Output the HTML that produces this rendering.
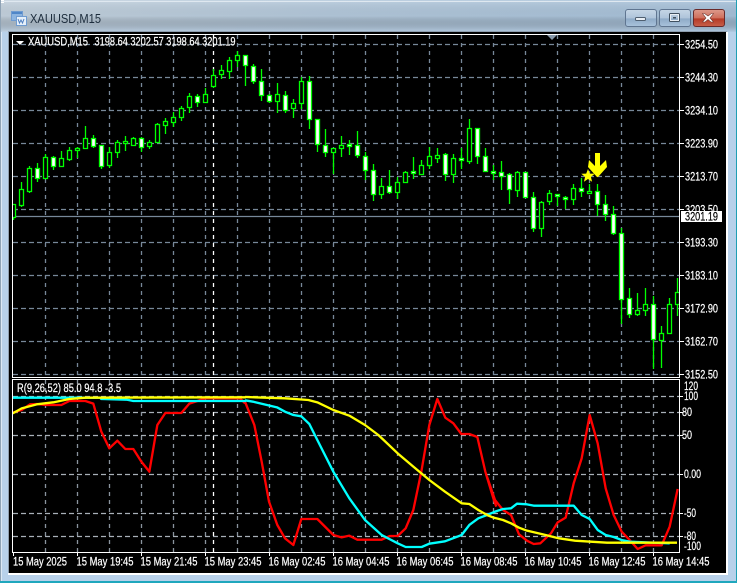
<!DOCTYPE html>
<html><head><meta charset="utf-8"><title>XAUUSD,M15</title>
<style>
html,body{margin:0;padding:0;width:737px;height:583px;overflow:hidden;background:#fff}
svg{display:block;position:absolute;left:0;top:0}
text{font-family:"Liberation Sans",sans-serif;font-size:11.5px;fill:#fff;stroke:#fff;stroke-width:.2px}
</style></head><body>
<svg width="737" height="583" viewBox="0 0 737 583" xmlns="http://www.w3.org/2000/svg">
<defs>
<linearGradient id="tb" x1="0" x2="1" y1="0" y2="0"><stop offset="0" stop-color="#c4d2de"/><stop offset=".45" stop-color="#b4c9dc"/><stop offset="1" stop-color="#a6c1da"/></linearGradient>
<linearGradient id="tv" x1="0" x2="0" y1="0" y2="1"><stop offset="0" stop-color="#fff" stop-opacity=".15"/><stop offset=".5" stop-color="#000" stop-opacity=".04"/><stop offset="1" stop-color="#bcd3ea" stop-opacity=".6"/></linearGradient>
<linearGradient id="btn" x1="0" x2="0" y1="0" y2="1"><stop offset="0" stop-color="#c6d6e6"/><stop offset=".5" stop-color="#aec4da"/><stop offset=".55" stop-color="#8fabc7"/><stop offset="1" stop-color="#a9c3dc"/></linearGradient>
<linearGradient id="cls" x1="0" x2="0" y1="0" y2="1"><stop offset="0" stop-color="#dd9a8c"/><stop offset=".5" stop-color="#cf6f5c"/><stop offset=".55" stop-color="#b53a26"/><stop offset="1" stop-color="#c8604a"/></linearGradient>
<clipPath id="cc"><rect x="13" y="35" width="666" height="342"/></clipPath>
<clipPath id="cs"><rect x="13" y="380" width="666" height="172"/></clipPath>
</defs>
<!-- window frame -->
<rect x="0" y="0" width="737" height="583" fill="#b8d1ea"/>
<rect x="0" y="0" width="737" height="32" fill="url(#tb)"/>
<rect x="0" y="0" width="737" height="32" fill="url(#tv)"/>
<rect x="0" y="0" width="4" height="3" fill="#fff"/>
<rect x="0" y="0" width="1" height="583" fill="#8fa3b5"/>
<rect x="736" y="0" width="1" height="583" fill="#1f9fb4"/>
<rect x="0" y="581" width="737" height="2" fill="#1fa7bd"/>
<rect x="1" y="1" width="735" height="1" fill="#dfe8f0"/>
<rect x="1" y="32" width="1" height="549" fill="#dce8f4"/>
<rect x="8" y="31" width="719" height="543" fill="#8e9eae"/>
<rect x="726" y="32" width="2" height="543" fill="#fff"/>
<rect x="8" y="573" width="720" height="2" fill="#fff"/>
<rect x="9" y="32" width="717" height="541" fill="#000"/>
<!-- title icon -->
<rect x="11.5" y="11.5" width="11" height="9" fill="#8cb4e0" stroke="#6f9bd0"/>
<rect x="12" y="12" width="10" height="2" fill="#4f86c8"/>
<rect x="16.5" y="16.5" width="10" height="9" fill="#e6f0fa" stroke="#6f9bd0"/>
<path d="M18 19l1.5 4 1.5-3 1.500 3 1.500-4" fill="none" stroke="#4f7fc0"/>
<text x="30" y="23" textLength="71" lengthAdjust="spacingAndGlyphs" style="font-size:12.500px;fill:#1c2c3c;stroke:none">XAUUSD,M15</text>
<!-- buttons -->
<rect x="625.500" y="9.500" width="31" height="17" rx="2.500" fill="url(#btn)" stroke="#5f7590"/>
<rect x="635.500" y="17.500" width="10" height="3" rx="1" fill="#e8eef4" stroke="#4f5f70"/>
<rect x="659.500" y="9.500" width="31" height="17" rx="2.500" fill="url(#btn)" stroke="#5f7590"/>
<rect x="669.500" y="13.500" width="10" height="8" rx="1" fill="none" stroke="#3f5060" stroke-width="1"/>
<rect x="670.500" y="14.500" width="8" height="6" fill="none" stroke="#e8eef4"/>
<rect x="673" y="17" width="3" height="1.500" fill="#3f5060"/>
<rect x="693.500" y="9.500" width="31" height="17" rx="2.500" fill="url(#cls)" stroke="#6a2a2a"/>
<path d="M704.500 13.500l3.500 2.500 3.500-2.500h2l-3.500 4.500 3.500 4h-2.500l-3-2.500-3 2.500h-2.500l3.500-4-3.500-4.500z" fill="#fff" stroke="#6e3a34" stroke-width=".6"/>
<!-- main grid -->
<g fill="none" stroke-width="1.300">
<path stroke="#778899" stroke-dasharray="5 3" d="M13 44.500H679M13 77.500H679M13 110.500H679M13 143.500H679M13 176.500H679M13 209.500H679M13 242.500H679M13 275.500H679M13 308.500H679M13 341.500H679M13 374.500H679"/>
<path stroke="#778899" stroke-dasharray="4 4" d="M45.500 35V377M77.500 35V377M109.500 35V377M141.500 35V377M173.500 35V377M205.500 35V377M237.500 35V377M269.500 35V377M301.500 35V377M333.500 35V377M365.500 35V377M397.500 35V377M429.500 35V377M461.500 35V377M493.500 35V377M525.500 35V377M557.500 35V377M589.500 35V377M621.500 35V377M653.500 35V377"/>
<path stroke="#fff" stroke-dasharray="4 4" d="M213.500 35V377"/>
<path stroke="#778899" d="M13 216.500H679"/>
<!-- sub grid -->
<path stroke="#a8b0b8" stroke-dasharray="5 3" d="M13 396.500H679M13 412.500H679M13 435.500H679M13 474.500H679M13 513.500H679M13 536.500H679"/>
<path stroke="#8a949e" stroke-dasharray="4 4" d="M45.500 380V552M77.500 380V552M109.500 380V552M141.500 380V552M173.500 380V552M205.500 380V552M237.500 380V552M269.500 380V552M301.500 380V552M333.500 380V552M365.500 380V552M397.500 380V552M429.500 380V552M461.500 380V552M493.500 380V552M525.500 380V552M557.500 380V552M589.500 380V552M621.500 380V552M653.500 380V552"/>
<path stroke="#fff" stroke-dasharray="4 4" d="M213.500 380V552"/>
</g>
<!-- candles -->
<g clip-path="url(#cc)" stroke="#00ff00" stroke-width="1.300">
<path fill="none" d="M13.500 204V220M21.500 182V207M29.500 166V193M37.500 163V182M45.500 154V178M53.500 156V170M61.500 151V166M69.500 147V161M77.500 147V158M85.500 126V149M93.500 135V148M101.500 145V169M109.500 147V168M117.500 140V158M125.500 136V151M133.500 137V146M141.500 137V152M149.500 140V149M157.500 123V143M165.500 118V134M173.500 112V127M181.500 106V121M189.500 93V113M197.500 94V107M205.500 88V103M213.500 69V88M221.500 65V79M229.500 57V79M237.500 51V67M245.500 55V86M253.500 64V84M261.500 69V101M269.500 94V103M277.500 83V113M285.500 91V113M293.500 99V118M301.500 77V109M309.500 76V129M317.500 119V152M325.500 129V157M333.500 148V174M341.500 136V157M349.500 140V155M357.500 131V158M365.500 152V180M373.500 164V201M381.500 178V199M389.500 170V194M397.500 177V199M405.500 171V183M413.500 157V179M421.500 160V174M429.500 147V169M437.500 148V163M445.500 153V181M453.500 154V183M461.500 148V169M469.500 119V164M477.500 128V164M485.500 148V171M493.500 165V180M501.500 161V190M509.500 173V204M517.500 171V197M525.500 172V198M533.500 192V232M541.500 201V237M549.500 190V205M557.500 194V206M565.500 196V209M573.500 184V205M581.500 178V197M589.500 184V193M597.500 184V216M605.500 195V221M613.500 206V235M621.500 228V324M629.500 288V318M637.500 293V316M645.500 288V316M653.500 296V369M661.500 326V368M669.500 298V334M677.500 278V316"/>
<path fill="#000" d="M11.500 204.500h4v13h-4zM19.500 189.500h4v16h-4zM27.500 168.500h4v23h-4zM43.500 157.500h4v21h-4zM59.500 158.500h4v8h-4zM67.500 150.500h4v9h-4zM75.500 148.500h4v2h-4zM83.500 138.500h4v10h-4zM107.500 152.500h4v13h-4zM115.500 142.500h4v10h-4zM123.500 141.500h4v2h-4zM131.500 138.500h4v7h-4zM147.500 142.500h4v4h-4zM155.500 124.500h4v18h-4zM163.500 121.500h4v4h-4zM171.500 117.500h4v5h-4zM179.500 108.500h4v9h-4zM187.500 96.500h4v11h-4zM203.500 94.500h4v8h-4zM211.500 75.500h4v11h-4zM219.500 70.500h4v4h-4zM227.500 60.500h4v11h-4zM235.500 55.500h4v5h-4zM275.500 94.500h4v7h-4zM291.500 103.500h4v5h-4zM299.500 81.500h4v22h-4zM331.500 148.500h4v4h-4zM339.500 145.500h4v3h-4zM379.500 186.500h4v8h-4zM395.500 182.500h4v10h-4zM403.500 172.500h4v10h-4zM419.500 165.500h4v9h-4zM427.500 156.500h4v9h-4zM435.500 155.500h4v3h-4zM451.500 158.500h4v16h-4zM467.500 128.500h4v33h-4zM515.500 172.500h4v18h-4zM539.500 202.500h4v26h-4zM547.500 193.500h4v8h-4zM571.500 188.500h4v11h-4zM587.500 191.500h4v2h-4zM635.500 310.500h4v4h-4zM643.500 304.500h4v6h-4zM659.500 333.500h4v7h-4zM667.500 304.500h4v29h-4zM675.500 292.500h4v12h-4z"/>
<path fill="#fff" d="M35.500 168.500h4v10h-4zM51.500 157.500h4v9h-4zM91.500 138.500h4v8h-4zM99.500 145.500h4v21h-4zM139.500 138.500h4v9h-4zM195.500 96.500h4v6h-4zM243.500 55.500h4v10h-4zM251.500 66.500h4v15h-4zM259.500 81.500h4v14h-4zM267.500 95.500h4v6h-4zM283.500 95.500h4v15h-4zM307.500 81.500h4v38h-4zM315.500 119.500h4v25h-4zM323.500 145.500h4v7h-4zM347.500 144.500h4v2h-4zM355.500 145.500h4v10h-4zM363.500 156.500h4v14h-4zM371.500 170.500h4v24h-4zM387.500 186.500h4v6h-4zM411.500 171.500h4v2h-4zM443.500 154.500h4v20h-4zM459.500 158.500h4v2h-4zM475.500 128.500h4v28h-4zM483.500 156.500h4v15h-4zM491.500 171.500h4v2h-4zM499.500 172.500h4v4h-4zM507.500 174.500h4v15h-4zM523.500 172.500h4v25h-4zM531.500 197.500h4v31h-4zM555.500 194.500h4v2h-4zM563.500 197.500h4v2h-4zM579.500 188.500h4v3h-4zM595.500 191.500h4v13h-4zM603.500 204.500h4v10h-4zM611.500 214.500h4v19h-4zM619.500 233.500h4v66h-4zM627.500 298.500h4v16h-4zM651.500 304.500h4v35h-4z"/>
</g>
<!-- star and arrow -->
<polygon fill="#ffff00" points="588,169 589.800,173.600 594.700,173.800 590.900,176.900 592.100,181.700 588,179 583.900,181.700 585.100,176.900 581.300,173.800 586.200,173.600"/>
<polygon fill="#ffff00" points="595,153 600,153 600,166 606,160 607,167 598,177 597,177 588,167 589,160 595,166"/>
<!-- indicator lines -->
<g clip-path="url(#cs)" fill="none" stroke-linejoin="round">
<g transform="translate(0,375) scale(.33333)" stroke="#ff0000" stroke-width="7">
<polyline points="38,113 65,105 90,88 112,87 136,90 184,90 208,78 256,78 280,86 304,170 328,220 352,197 376,222 400,222 424,260 448,290 472,150 496,114 544,114 568,86 616,70 720,70 735,85"/>
</g>
<g transform="translate(245,375) scale(.33333)" stroke="#ff0000" stroke-width="7">
<polyline points="0,80 28,150 50,260 72,380 97,450 120,490 145,510 169,432 217,432 265,480 290,487 313,482 337,494 410,494 434,483 458,483 482,460 505,405 529,290 553,150 577,72 601,128 625,145 649,177 673,177 697,186 721,290 745,370 754,395"/>
</g>
<g transform="translate(487,375) scale(.33333)" stroke="#ff0000" stroke-width="7">
<polyline points="0,305 24,375 48,405 72,420 96,478 120,497 140,507 160,505 192,475 212,442 236,428 260,325 284,250 308,120 332,205 356,340 380,420 404,470 428,495 452,522 476,511 524,511 548,455 572,342"/>
</g>
<g transform="translate(0,375) scale(.33333)" stroke="#00ffff" stroke-width="7">
<polyline points="38,68 300,68 304,72 380,74 400,78 738,78"/>
</g>
<g transform="translate(245,375) scale(.33333)" stroke="#00ffff" stroke-width="7">
<polyline points="0,76 24,80 96,97 120,110 145,120 169,124 193,147 217,195 265,290 313,370 360,435 410,480 458,505 482,516 530,516 553,506 600,499 650,480 673,450 700,430 726,420"/>
</g>
<g transform="translate(487,375) scale(.33333)" stroke="#00ffff" stroke-width="7">
<polyline points="0,420 24,410 48,402 72,400 90,386 120,388 140,392 260,392 284,420 308,432 332,465 356,480 380,486 404,495 428,500 548,505"/>
</g>
<g transform="translate(0,375) scale(.33333)" stroke="#ffff00" stroke-width="7">
<polyline points="38,115 65,100 110,88 160,82 208,72 256,68 738,67"/>
</g>
<g transform="translate(245,375) scale(.33333)" stroke="#ffff00" stroke-width="7">
<polyline points="0,66 120,70 190,75 217,82 265,105 313,122 360,150 400,180 458,235 505,275 553,315 600,350 650,385 673,387 700,405 726,420"/>
</g>
<g transform="translate(487,375) scale(.33333)" stroke="#ffff00" stroke-width="7">
<polyline points="0,420 20,428 48,435 72,445 96,458 120,467 168,478 216,490 264,497 312,500 360,503 570,503"/>
</g>
</g>
<!-- chart frames -->
<g shape-rendering="crispEdges" fill="none" stroke="#fff">
<path d="M12.500 34.500H679.500V377.500H12.500Z"/>
<path d="M12.500 379.500H679.500V552.500H12.500Z"/>
<path d="M680 44.500h4M680 77.500h4M680 110.500h4M680 143.500h4M680 176.500h4M680 209.500h4M680 242.500h4M680 275.500h4M680 308.500h4M680 341.500h4M680 374.500h4M680 396.500h3M680 412.500h3M680 435.500h3M680 474.500h3M680 513.500h3M680 536.500h3"/>
<path d="M13.500 552v4M77.500 552v4M141.500 552v4M205.500 552v4M269.500 552v4M333.500 552v4M397.500 552v4M461.500 552v4M525.500 552v4M589.500 552v4M653.500 552v4"/>
</g>
<polygon points="547,35 557,35 552,40" fill="#8899aa"/>
<polygon points="16,41 24,41 20,45" fill="#fff"/>
<!-- labels -->
<text x="28" y="45.500" textLength="60" lengthAdjust="spacingAndGlyphs">XAUUSD,M15</text>
<text x="94.500" y="45.500" textLength="141" lengthAdjust="spacingAndGlyphs">3198.64 3202.57 3198.64 3201.19</text>
<text x="17" y="392" textLength="104" lengthAdjust="spacingAndGlyphs">R(9,26,52) 85.0 94.8 -3.5</text>
<g>
<text x="685" y="48.500" textLength="33" lengthAdjust="spacingAndGlyphs">3254.50</text>
<text x="685" y="81.500" textLength="33" lengthAdjust="spacingAndGlyphs">3244.30</text>
<text x="685" y="114.500" textLength="33" lengthAdjust="spacingAndGlyphs">3234.10</text>
<text x="685" y="147.500" textLength="33" lengthAdjust="spacingAndGlyphs">3223.90</text>
<text x="685" y="180.500" textLength="33" lengthAdjust="spacingAndGlyphs">3213.70</text>
<text x="685" y="213.500" textLength="33" lengthAdjust="spacingAndGlyphs">3203.50</text>
<text x="685" y="246.500" textLength="33" lengthAdjust="spacingAndGlyphs">3193.30</text>
<text x="685" y="279.500" textLength="33" lengthAdjust="spacingAndGlyphs">3183.10</text>
<text x="685" y="312.500" textLength="33" lengthAdjust="spacingAndGlyphs">3172.90</text>
<text x="685" y="345.500" textLength="33" lengthAdjust="spacingAndGlyphs">3162.70</text>
<text x="685" y="378.500" textLength="33" lengthAdjust="spacingAndGlyphs">3152.50</text>
</g>
<rect x="681" y="211" width="41" height="11" fill="#fff"/>
<text x="685" y="220.500" textLength="33" lengthAdjust="spacingAndGlyphs" style="fill:#000;stroke:#000">3201.19</text>
<text x="684" y="390" textLength="14" lengthAdjust="spacingAndGlyphs">120</text>
<text x="684" y="400" textLength="14" lengthAdjust="spacingAndGlyphs">100</text>
<text x="682" y="416" textLength="10" lengthAdjust="spacingAndGlyphs">80</text>
<text x="682" y="439" textLength="10" lengthAdjust="spacingAndGlyphs">50</text>
<text x="684" y="478" textLength="17" lengthAdjust="spacingAndGlyphs">0.00</text>
<text x="684" y="517" textLength="12" lengthAdjust="spacingAndGlyphs">-50</text>
<text x="684" y="540" textLength="12" lengthAdjust="spacingAndGlyphs">-80</text>
<text x="684" y="550" textLength="17" lengthAdjust="spacingAndGlyphs">-100</text>
<g>
<text x="13" y="565.500" textLength="54" lengthAdjust="spacingAndGlyphs">15 May 2025</text>
<text x="76.500" y="565.500" textLength="57" lengthAdjust="spacingAndGlyphs">15 May 19:45</text>
<text x="140.500" y="565.500" textLength="57" lengthAdjust="spacingAndGlyphs">15 May 21:45</text>
<text x="204.500" y="565.500" textLength="57" lengthAdjust="spacingAndGlyphs">15 May 23:45</text>
<text x="268.500" y="565.500" textLength="57" lengthAdjust="spacingAndGlyphs">16 May 02:45</text>
<text x="332.500" y="565.500" textLength="57" lengthAdjust="spacingAndGlyphs">16 May 04:45</text>
<text x="396.500" y="565.500" textLength="57" lengthAdjust="spacingAndGlyphs">16 May 06:45</text>
<text x="460.500" y="565.500" textLength="57" lengthAdjust="spacingAndGlyphs">16 May 08:45</text>
<text x="524.500" y="565.500" textLength="57" lengthAdjust="spacingAndGlyphs">16 May 10:45</text>
<text x="588.500" y="565.500" textLength="57" lengthAdjust="spacingAndGlyphs">16 May 12:45</text>
<text x="652.500" y="565.500" textLength="57" lengthAdjust="spacingAndGlyphs">16 May 14:45</text>
</g>
</svg>
</body></html>
